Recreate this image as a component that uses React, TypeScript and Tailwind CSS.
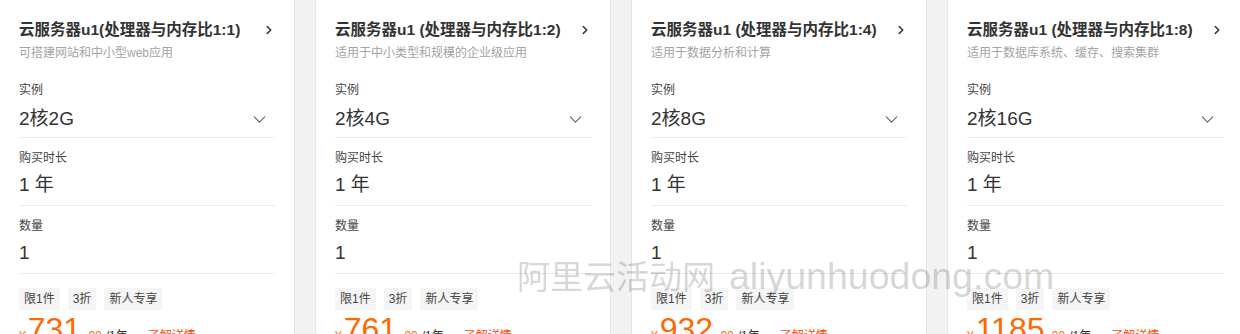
import React from 'react';
import { ChevronRight, ChevronDown } from 'lucide-react';

const plans = [
  { title: '云服务器u1(处理器与内存比1:1)', desc: '可搭建网站和中小型web应用', spec: '2核2G', price: '731' },
  { title: '云服务器u1 (处理器与内存比1:2)', desc: '适用于中小类型和规模的企业级应用', spec: '2核4G', price: '761' },
  { title: '云服务器u1 (处理器与内存比1:4)', desc: '适用于数据分析和计算', spec: '2核8G', price: '932' },
  { title: '云服务器u1 (处理器与内存比1:8)', desc: '适用于数据库系统、缓存、搜索集群', spec: '2核16G', price: '1185' }
];

const tags = ['限1件', '3折', '新人专享'];

const Field = ({ label, value, first, select }: { label: string; value: string; first?: boolean; select?: boolean }) => (
  <div className={`border-b border-[#ebebeb] ${first ? 'pt-[22px] pb-[2px]' : 'pt-[13px] pb-[7px]'}`}>
    <div className="h-[14px] text-[12px] leading-[14px] text-[#444]">{label}</div>
    <div
      className={`mt-[6px] flex items-center justify-between text-[19px] text-[#333] ${
        first ? 'h-[32px] leading-[32px]' : 'h-[27px] leading-[27px]'
      }`}
    >
      <span>{value}</span>
      {select && <ChevronDown size={21} strokeWidth={1.3} className="mr-[5px] text-[#666]" />}
    </div>
  </div>
);

const App = () => {
  return (
    <div className="relative h-[334px] w-[1240px] overflow-hidden bg-[#f2f2f2] font-['Liberation_Sans','Noto_Sans_CJK_SC',sans-serif]">
      <div className="ml-[-1px] flex gap-[20px]">
        {plans.map((p, i) => (
          <div key={i} className="h-[360px] w-[296px] shrink-0 border-x border-[#e6e6e6] bg-white px-[19px] pt-[20px]">
            {/* title */}
            <div className="flex h-[20px] items-center justify-between text-[15.5px] font-bold leading-[20px] text-[#333]">
              <span>{p.title}</span>
              <ChevronRight size={14} strokeWidth={2.6} className="mr-[-1px] text-[#333]" />
            </div>
            <div className="mt-[5px] h-[16px] text-[12px] leading-[16px] text-[#a3a3a3]">{p.desc}</div>

            <Field label="实例" value={p.spec} first select />
            <Field label="购买时长" value="1 年" />
            <Field label="数量" value="1" />

            {/* tags */}
            <div className="mt-[14px] flex gap-[8px]">
              {tags.map((t) => (
                <span key={t} className="h-[22px] bg-[#f5f5f5] px-[5px] text-[12px] leading-[22px] text-[#444]">
                  {t}
                </span>
              ))}
            </div>

            {/* price */}
            <div className="mt-[1px] flex h-[36px] items-baseline text-[#ff6a00]">
              <span className="text-[12px]">¥</span>
              <span className="ml-[2px] text-[32px] leading-[36px]">{p.price}</span>
              <span className="ml-[4px] text-[12px]">.00</span>
              <span className="ml-[4px] text-[12px] text-[#333]">/1年</span>
              <span className="ml-[20px] text-[12px] text-[#ff4a00]">了解详情</span>
            </div>
          </div>
        ))}
      </div>

      {/* watermark */}
      <div className="pointer-events-none absolute left-[517px] top-[254px] flex items-baseline whitespace-nowrap text-black/[0.18]">
        <span className="text-[33px] leading-[44px]">阿里云活动网</span>
        <span className="ml-[14px] text-[37.5px] leading-[44px]">aliyunhuodong.com</span>
      </div>
    </div>
  );
};

export default App;
